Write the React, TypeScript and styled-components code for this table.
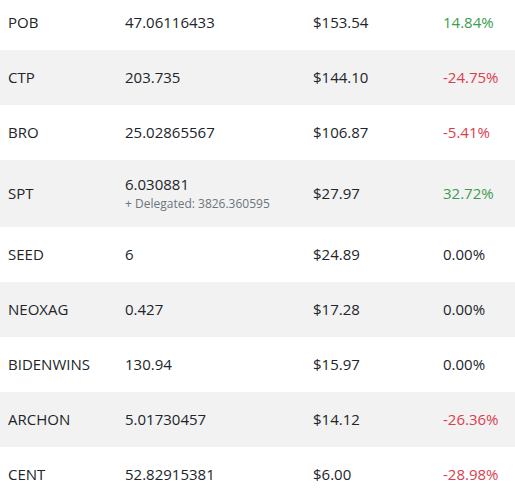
import React from "react";
import styled, { createGlobalStyle } from "styled-components";

const Global = createGlobalStyle`
  html, body { margin: 0; padding: 0; background: #fff; overflow: hidden; }
  body { font-family: "Open Sans", "Noto Sans", sans-serif; color: #212529; }
`;

type Tone = "up" | "down" | "flat";

interface Token {
  symbol: string;
  amount: string;
  delegated?: string;
  value: string;
  change: string;
  tone: Tone;
}

const tokens: Token[] = [
  { symbol: "POB", amount: "47.06116433", value: "$153.54", change: "14.84%", tone: "up" },
  { symbol: "CTP", amount: "203.735", value: "$144.10", change: "-24.75%", tone: "down" },
  { symbol: "BRO", amount: "25.02865567", value: "$106.87", change: "-5.41%", tone: "down" },
  { symbol: "SPT", amount: "6.030881", delegated: "3826.360595", value: "$27.97", change: "32.72%", tone: "up" },
  { symbol: "SEED", amount: "6", value: "$24.89", change: "0.00%", tone: "flat" },
  { symbol: "NEOXAG", amount: "0.427", value: "$17.28", change: "0.00%", tone: "flat" },
  { symbol: "BIDENWINS", amount: "130.94", value: "$15.97", change: "0.00%", tone: "flat" },
  { symbol: "ARCHON", amount: "5.01730457", value: "$14.12", change: "-26.36%", tone: "down" },
  { symbol: "CENT", amount: "52.82915381", value: "$6.00", change: "-28.98%", tone: "down" },
];

const Table = styled.div`
  display: flex;
  flex-direction: column;
  width: 515px;
  margin-top: -5px;
`;

const Row = styled.div<{ $striped: boolean }>`
  display: grid;
  grid-template-columns: 117px 188px 130px 1fr;
  align-items: center;
  min-height: 55px;
  box-sizing: border-box;
  padding: 14px 0 14px 8px;
  background: ${(p) => (p.$striped ? "#f2f2f2" : "#ffffff")};
  font-size: 15px;
  line-height: 21px;
`;

const Cell = styled.div`
  display: flex;
  flex-direction: column;
  white-space: nowrap;
`;

const Sub = styled.span`
  font-size: 12px;
  line-height: 18px;
  color: #6c757d;
`;

const Change = styled.div<{ $tone: Tone }>`
  color: ${(p) => (p.$tone === "up" ? "#3d9c52" : p.$tone === "down" ? "#d9404e" : "#212529")};
`;

export default function App() {
  return (
    <>
      <Global />
      <Table>
        {tokens.map((t, i) => (
          <Row key={t.symbol} $striped={i % 2 === 1}>
            <Cell>{t.symbol}</Cell>
            <Cell>
              <span>{t.amount}</span>
              {t.delegated && <Sub>+ Delegated: {t.delegated}</Sub>}
            </Cell>
            <Cell>{t.value}</Cell>
            <Change $tone={t.tone}>{t.change}</Change>
          </Row>
        ))}
      </Table>
    </>
  );
}
